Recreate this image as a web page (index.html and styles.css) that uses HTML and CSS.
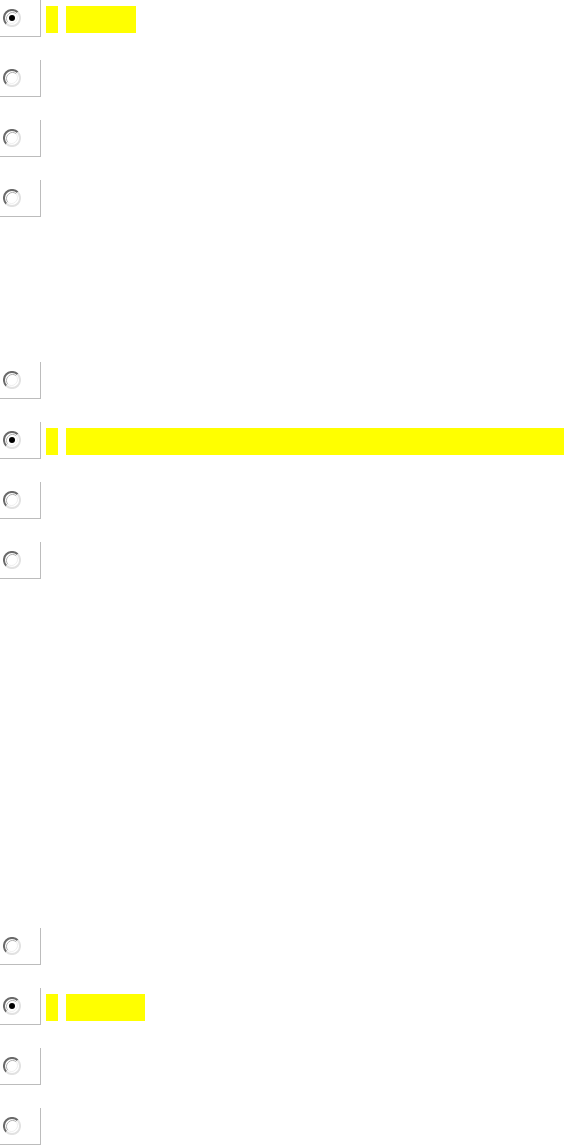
FILE: index.html
```html
<!DOCTYPE html>
<html>
<head>
<meta charset="utf-8">
<link rel="stylesheet" href="styles.css">
</head>
<body>
<div class="page">
  <div class="group">
    <div class="row"><div class="box"><svg class="radio" viewBox="0 0 18 18"><use href="#r-on"/></svg></div><span class="mark"></span><span class="txt w1"></span></div>
    <div class="row"><div class="box"><svg class="radio" viewBox="0 0 18 18"><use href="#r-off"/></svg></div></div>
    <div class="row"><div class="box"><svg class="radio" viewBox="0 0 18 18"><use href="#r-off"/></svg></div></div>
    <div class="row"><div class="box"><svg class="radio" viewBox="0 0 18 18"><use href="#r-off"/></svg></div></div>
  </div>
  <div class="group g2">
    <div class="row"><div class="box"><svg class="radio" viewBox="0 0 18 18"><use href="#r-off"/></svg></div></div>
    <div class="row"><div class="box"><svg class="radio" viewBox="0 0 18 18"><use href="#r-on"/></svg></div><span class="mark"></span><span class="txt wfull"></span></div>
    <div class="row"><div class="box"><svg class="radio" viewBox="0 0 18 18"><use href="#r-off"/></svg></div></div>
    <div class="row"><div class="box"><svg class="radio" viewBox="0 0 18 18"><use href="#r-off"/></svg></div></div>
  </div>
  <div class="group g3">
    <div class="row"><div class="box"><svg class="radio" viewBox="0 0 18 18"><use href="#r-off"/></svg></div></div>
    <div class="row"><div class="box"><svg class="radio" viewBox="0 0 18 18"><use href="#r-on"/></svg></div><span class="mark"></span><span class="txt w3"></span></div>
    <div class="row"><div class="box"><svg class="radio" viewBox="0 0 18 18"><use href="#r-off"/></svg></div></div>
    <div class="row"><div class="box"><svg class="radio" viewBox="0 0 18 18"><use href="#r-off"/></svg></div></div>
  </div>
</div>
<svg class="defs" width="0" height="0">
  <defs>
    <g id="r-off">
      <circle cx="9" cy="9" r="8" fill="#ffffff"/>
      <path d="M3.3 14.7 A8 8 0 0 1 14.7 3.3" fill="none" stroke="#6a6a6a" stroke-width="2"/>
      <path d="M14.7 3.3 A8 8 0 0 1 3.3 14.7" fill="none" stroke="#e2e2e2" stroke-width="2"/>
      <path d="M4.8 13.2 A6 6 0 0 1 13.2 4.8" fill="none" stroke="#b4b4b4" stroke-width="1"/>
      <path d="M13.2 4.8 A6 6 0 0 1 4.8 13.2" fill="none" stroke="#f0f0f0" stroke-width="1"/>
    </g>
    <g id="r-on">
      <use href="#r-off"/>
      <circle cx="9" cy="9" r="3" fill="#000000"/>
    </g>
  </defs>
</svg>
</body>
</html>
```
FILE: styles.css
```css
html, body {
  margin: 0;
  padding: 0;
  background: #ffffff;
}
.page {
  display: flex;
  flex-direction: column;
}
.group {
  display: flex;
  flex-direction: column;
  gap: 23px;
}
.g2 { margin-top: 145px; }
.g3 { margin-top: 349px; }
.row {
  display: flex;
  align-items: flex-start;
  height: 37px;
}
.box {
  box-sizing: border-box;
  width: 41px;
  height: 37px;
  flex: none;
  border-right: 1px solid #bcbcbc;
  border-bottom: 1px solid #bcbcbc;
  display: flex;
  align-items: center;
}
.radio {
  width: 18px;
  height: 18px;
  margin-left: 3px;
  margin-top: -1px;
}
.mark, .txt {
  display: block;
  background: #ffff00;
  height: 27px;
  margin-top: 6px;
  flex: none;
}
.mark { width: 12px; margin-left: 5px; }
.txt { margin-left: 8px; }
.w1 { width: 70px; }
.w3 { width: 79px; }
.wfull { flex: 1; }
.defs { position: absolute; width: 0; height: 0; }
```
